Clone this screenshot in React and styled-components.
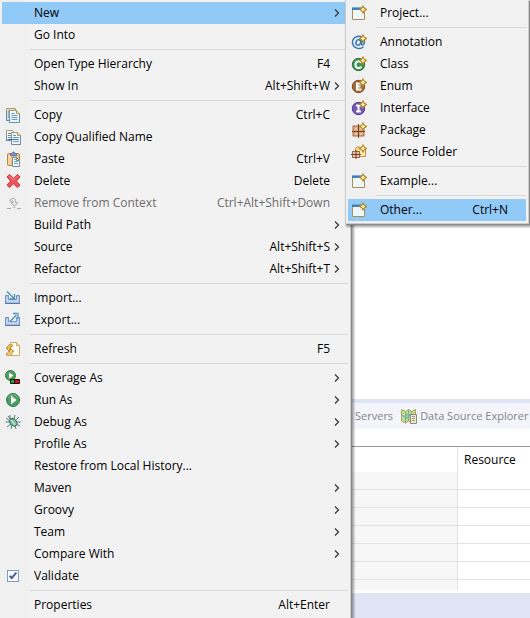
import React from "react";
import styled, { createGlobalStyle, css } from "styled-components";

const GlobalStyle = createGlobalStyle`
  *, *::before, *::after { box-sizing: border-box; }
  body {
    margin: 0;
    overflow: hidden;
    background: #fff;
    color: #000;
    font: 12px/22px "Open Sans", "Noto Sans", sans-serif;
  }
`;

const Page = styled.div`
  position: relative;
  height: 100vh;
  overflow: hidden;
`;

/* ---------- Workbench behind the menus ---------- */

const Workbench = styled.main`
  display: flex;
  flex-direction: column;
  height: 100%;
`;

const Editor = styled.section`
  flex: 1;
  background: #fff;
`;

const TabBar = styled.nav`
  display: flex;
  gap: 8px;
  height: 30px;
  padding-left: 355px;
  overflow: hidden;
  border-top: 4px solid #dfe5f5;
  background: #f4f4fb;
`;

const Tab = styled.button`
  display: flex;
  flex: none;
  align-items: center;
  gap: 3px;
  padding: 0;
  border: 0;
  background: none;
  color: #85858a;
  font: inherit;
  font-size: 11px;
  white-space: nowrap;
`;

const Problems = styled.section`
  padding: 17px 0 3px;
`;

const Grid = styled.table`
  width: 100%;
  table-layout: fixed;
  border-collapse: separate;
  border-spacing: 0;
  border-top: 1px solid #999;

  th, td {
    height: 18px;
    padding: 0 6px;
    border-bottom: 1px solid #e2e2e2;
    font-weight: normal;
    text-align: left;
    line-height: 16px;
  }
  th { height: 25px; border-bottom: 0; }
  th:first-child, td:first-child { border-right: 1px solid #e2e2e2; }
  td:first-child { background: #f7f7f7; }
  tbody tr:last-child td { height: 10px; border-bottom: 0; line-height: 8px; }
`;

const FirstColumn = styled.col`
  width: 458px;
`;

const StatusBar = styled.footer`
  flex: none;
  height: 25px;
  background: #dfe5f5;
`;

/* ---------- Menus ---------- */

const Menu = styled.div`
  position: absolute;
  top: 0;
  left: ${(p) => p.$left}px;
  width: ${(p) => p.$width}px;
  padding: 2px;
  border: solid #ccc;
  border-width: ${(p) => (p.$nested ? "0 1px 1px" : "0 1px 0 0")};
  background: linear-gradient(to right, #f0f0f0 30px, #f2f2f2 30px);
  box-shadow: 1px 1px 0 #888, 2px 2px 2px 1px rgba(0, 0, 0, 0.35);
`;

const rowStyle = css`
  display: flex;
  align-items: center;
  width: 100%;
  height: 22px;
  padding: 0 8px 0 0;
  border: 0;
  background: ${(p) => (p.$active ? "#91c9f7" : "transparent")};
  color: ${(p) => (p.$muted ? "#6d6d6d" : "#000")};
  font: inherit;
  text-align: left;
  white-space: nowrap;
`;

const ItemButton = styled.button`${rowStyle}`;
const ItemLabel = styled.label`${rowStyle}`;

const Gutter = styled.span`
  display: flex;
  flex: none;
  align-items: center;
  width: 32px;
  padding-left: 3px;
`;

const Caption = styled.span`
  flex: 1;
`;

const Shortcut = styled.span`
  padding-right: ${(p) => (p.$nested ? 10 : 4)}px;
`;

const ArrowSlot = styled.span`
  display: flex;
  width: 6px;
`;

const Divider = styled.hr`
  height: 1px;
  margin: 3px 0 3px 28px;
  border: 0;
  background: #d7d7d7;
`;

const Tick = styled.input`
  display: grid;
  place-items: center;
  width: 12px;
  height: 12px;
  margin: 0 0 0 2px;
  appearance: none;
  border: 1px solid #7f9db9;
  background: #f4f8fc;

  &:checked::after {
    content: "";
    width: 4px;
    height: 8px;
    border: solid #4a5f88;
    border-width: 0 2px 2px 0;
    transform: translateY(-1px) rotate(40deg);
  }
`;

/* ---------- Icons ---------- */

const Svg = ({ children }) => (
  <svg width="16" height="16" viewBox="0 0 16 16" fill="none" aria-hidden="true">{children}</svg>
);

const Spark = () => (
  <path d="M12 1 13.300 3.200 15.500 4.500l-2.200 1.300L12 8l-1.300-2.200L8.500 4.500l2.200-1.300Z" fill="#fff9d8" stroke="#b98a1c" strokeWidth="1.200" />
);

const WindowIcon = () => (
  <Svg>
    <rect x="1" y="3" width="13" height="12" fill="#f7fbff" />
    <path d="M1.500 4v10.500h12V5" stroke="#a98f55" />
    <path d="M2 14V6h11v8Z" fill="#edf7fc" />
    <rect x="1" y="2" width="13" height="3" fill="#3d7fbd" />
    <path d="M1 2.500h13" stroke="#75acd8" />
    <Spark />
  </Svg>
);

const AnnotationIcon = () => (
  <Svg>
    <path d="M12.600 12.800C10.800 14.400 7.500 15 4.800 13.600 1.600 12 .6 8.200 2.400 5.200 4.200 2.300 8 1.400 11 3.100c2.600 1.600 3 5.200 1.800 7-.9 1.300-2.500 1-2.300-.5l.7-4" stroke="#3777b1" strokeWidth="1.500" />
    <ellipse cx="7.300" cy="8.500" rx="2.300" ry="2.800" transform="rotate(22 7.300 8.500)" stroke="#3777b1" strokeWidth="1.500" />
    <Spark />
  </Svg>
);

const TypeIcon = ({ fill, edge, letter }) => (
  <Svg>
    <circle cx="7.500" cy="8.500" r="6.200" fill={fill} stroke={edge} />
    {letter}
    <Spark />
  </Svg>
);

const ClassIcon = () => (
  <TypeIcon fill="#399552" edge="#28723e" letter={<path d="M10.300 6.500C8.500 4.500 4.500 5 4.500 8.700c0 3.600 3.800 4.300 6 2.100" stroke="#fff" strokeWidth="2" />} />
);
const EnumIcon = () => (
  <TypeIcon fill="#a36b3c" edge="#7c4c23" letter={<path d="M10 5.500H6v6h4.500M6 8.500h3.500" stroke="#fff" strokeWidth="2" />} />
);
const InterfaceIcon = () => (
  <TypeIcon fill="#7458b5" edge="#533993" letter={<path d="M5 5.500h5M5 11.500h5M7.500 5v7" stroke="#fff" strokeWidth="2" />} />
);

const PackageIcon = () => (
  <Svg>
    <rect x="2" y="4" width="11" height="10" fill="#d8a77c" stroke="#a46d48" />
    <path d="M4 6.500h2M9 6.500h2M4 12h2M9 12h2" stroke="#edc9a5" strokeWidth="2" />
    <path d="M7.500 2v14M1 9.500h13" stroke="#713f2b" />
    <Spark />
  </Svg>
);

const SourceFolderIcon = () => (
  <Svg>
    <path d="M4.500 12.500v-8L6 3h3l1 2h4.500v7.500Z" fill="#fbd991" stroke="#c8903d" />
    <path d="M6 7h8v5H6Z" fill="#fce9b4" />
    <rect x="1.500" y="7.500" width="7" height="6" fill="#e6c9a9" stroke="#9a6a4c" />
    <path d="M5 6v9M0 10.500h10" stroke="#713f2b" />
    <Spark />
  </Svg>
);

const CopyIcon = () => (
  <Svg>
    <path d="M1.500 1.500h9v12h-9Z" fill="#cfe1ee" stroke="#b29a5c" />
    <path d="M1.500 4v9.500H5" stroke="#5f8aa6" />
    <path d="M3 4h1.500M3 6h1.500M3 8h1.500M3 10h1.500" stroke="#5583ad" />
    <path d="M4.500 3.500h7l3 3v9h-10Z" fill="#eef6fd" stroke="#6f8ba2" />
    <path d="M4.500 9V3.500h7l3 3" stroke="#b29a5c" />
    <path d="M11.500 3.500v3h3" fill="#f4dda5" stroke="#b29a5c" />
    <path d="M6.500 6.500h3M6.500 8.500h6M6.500 10.500h6M6.500 12.500h6" stroke="#669acb" />
  </Svg>
);

const CopyNameIcon = () => (
  <Svg>
    <path d="M1.500 1.500h6l2 2v8h-8Z" fill="#eef6fd" stroke="#b29a5c" />
    <path d="M1.500 6v5.500h5" stroke="#6f8ba2" />
    <path d="M3 4.500h3M3 6.500h3M3 8.500h3" stroke="#5f92c4" />
    <path d="M6.500 3.500h6l3 3v9h-9Z" fill="#eef6fd" stroke="#6f8ba2" />
    <path d="M6.500 8V3.500h6l3 3" stroke="#b29a5c" />
    <path d="M12.500 3.500v3h3" fill="#f4dda5" stroke="#b29a5c" />
    <path d="M8 6.500h3M8 8.500h6M8 12.500h6" stroke="#669acb" />
    <path d="M2.500 10.500h11" stroke="#446f9f" />
  </Svg>
);

const PasteIcon = () => (
  <Svg>
    <rect x="2.500" y="2.500" width="12" height="12" rx="1" fill="#efbd7d" stroke="#b88443" />
    <path d="M4.500 4v9.500" stroke="#fce0b1" strokeWidth="2" />
    <path d="M5.500 4.500v-2H7L8 1h1l1 1.500h1.500v2Z" fill="#879bc2" stroke="#5b74a3" />
    <path d="M7.500 6.500h4l3 3v6h-7Z" fill="#f8fcff" stroke="#6f8ba2" />
    <path d="M9 8.500h2M9 10.500h4M9 12.500h4" stroke="#64a0c9" />
    <path d="M11.500 6.500v3h3" stroke="#6f8ba2" />
  </Svg>
);

const DeleteIcon = () => (
  <Svg>
    <path d="M4.500 1.500 8.500 5.200l4-3.700 2.500 2.300-3.600 4.400 3.600 4-2.500 2.400-4-3.800-4 3.800L2 12.200l3.600-4L2 3.800Z" fill="#ee555a" stroke="#cd343c" strokeLinejoin="round" />
    <path d="m4.500 3.200 4 3.600 4-3.600" stroke="#f88d8d" />
  </Svg>
);

const RemoveIcon = () => (
  <Svg>
    <path d="M4.500 5.500 7 3.500c2-.8 3.600.4 3.600 2.200v2h2.200L9.500 11.300 6 7.700h2.200V6.500c0-1-1.200-1-2 .2Z" fill="#ededed" stroke="#a9a9a9" />
    <path d="M2 13.500h4M12 13.500h4" stroke="#aaa" />
    <path d="M7 12.500h4" stroke="#ccc" />
  </Svg>
);

const Tray = () => (
  <>
    <path d="M.5 5.500h3v4h8v-4h3v8H.5Z" fill="#a9bfe1" stroke="#7393c3" />
    <path d="M0 13.500h15" stroke="#5578ad" />
    <path d="M2 7v4h11V7" stroke="#dce8f6" />
  </>
);

const ImportIcon = () => (
  <Svg>
    <Tray />
    <path d="m2 1.500 7 7M9.500 4v5h-5" stroke="#448fb4" strokeWidth="1.300" />
  </Svg>
);

const ExportIcon = () => (
  <Svg>
    <Tray />
    <path d="m5 9.500 7-7M8 1.500h5v5" stroke="#448fb4" strokeWidth="1.300" />
    <path d="m10 2 3-.5-.5 3Z" fill="#a2d0e3" />
  </Svg>
);

const RefreshIcon = () => (
  <Svg>
    <path d="M5.500 1.500h6l3 3v10h-9Z" fill="#fffdf4" stroke="#c8aa63" />
    <path d="M11.500 1.500v3h3" fill="#f6dfa1" stroke="#c8aa63" />
    <path d="M7.500 4C4.500 2.500 2.500 4.500 2.500 7H1l2.500 2.500L6 7H4.800c0-1.200 1-1.700 2.200-1.200Z" fill="#f1c868" stroke="#bd8428" />
    <path d="M1.500 14c3 1.500 6-.5 6-3.500h1.300L6 8l-2.500 2.500H5c0 1.500-1 2-3 1.500Z" fill="#f7d988" stroke="#bd8428" />
  </Svg>
);

const CoverageIcon = () => (
  <Svg>
    <circle cx="5.500" cy="5.500" r="5" fill="#4b9e60" stroke="#367f4a" />
    <path d="m4 2.500 4.500 3-4.500 3Z" fill="#fff" />
    <path d="M5.500 9.500h9v4h-9Z" fill="#1cae29" stroke="#111" />
    <path d="M10 10h4v3h-4Z" fill="#d40d18" />
    <path d="M9.500 10v3" stroke="#111" />
  </Svg>
);

const RunIcon = () => (
  <Svg>
    <circle cx="8" cy="8" r="6.500" fill="#4a9d60" stroke="#2e7744" />
    <path d="M3 6a5.500 5.500 0 0 1 10 0" stroke="#78b987" />
    <path d="m6 3.500 5.500 4.500L6 12.500Z" fill="#fff" />
  </Svg>
);

const DebugIcon = () => (
  <Svg>
    <path d="M5 1v4l1 1M10 1 9 5M1 4l4 3M.5 8H5M2 13l4-3M6 15l1-4M11 15l-1-4M15 12l-4-2M15.500 8H11M14 3l-3 3M3 2l3 4" stroke="#557b7d" />
    <ellipse cx="8.300" cy="8.300" rx="3" ry="4.200" transform="rotate(-42 8.300 8.300)" fill="#8fc5ab" stroke="#36736d" />
    <path d="m6.500 6.500 3.500 4" stroke="#d3eddc" />
  </Svg>
);

const DataSourceIcon = () => (
  <Svg>
    <path d="m.5 1.500 4 2 3-2 3 2 4-2v12l-4 1.500-3-2-3 2-4-2Z" fill="#c5e37d" stroke="#a2a478" />
    <path d="M4.500 3v12M7.500 1.500V13M10.500 3v4" stroke="#999f78" />
    <path d="m1 7 3 2 3-3 3 2M5 11l5-5" stroke="#70b7c8" strokeWidth="1.500" />
    <path d="M9.500 6.500h6v9h-6Z" fill="#eee9d7" stroke="#918b76" />
    <path d="M11 8.500h3M11 10.500h3M11 12.500h3" stroke="#a39d89" />
  </Svg>
);

const Arrow = () => (
  <svg width="6" height="8" viewBox="0 0 6 8" fill="none" aria-hidden="true">
    <path d="m1 .5 3.500 3.500L1 7.500" stroke="#333" strokeWidth="1.200" />
  </svg>
);

/* ---------- Menu content ---------- */

const mainGroups = [
  [
    { label: "New", sub: true, active: true },
    { label: "Go Into" },
  ],
  [
    { label: "Open Type Hierarchy", keys: "F4" },
    { label: "Show In", keys: "Alt+Shift+W", sub: true },
  ],
  [
    { label: "Copy", keys: "Ctrl+C", icon: CopyIcon },
    { label: "Copy Qualified Name", icon: CopyNameIcon },
    { label: "Paste", keys: "Ctrl+V", icon: PasteIcon },
    { label: "Delete", keys: "Delete", icon: DeleteIcon },
    { label: "Remove from Context", keys: "Ctrl+Alt+Shift+Down", icon: RemoveIcon, muted: true },
    { label: "Build Path", sub: true },
    { label: "Source", keys: "Alt+Shift+S", sub: true },
    { label: "Refactor", keys: "Alt+Shift+T", sub: true },
  ],
  [
    { label: "Import...", icon: ImportIcon },
    { label: "Export...", icon: ExportIcon },
  ],
  [{ label: "Refresh", keys: "F5", icon: RefreshIcon }],
  [
    { label: "Coverage As", sub: true, icon: CoverageIcon },
    { label: "Run As", sub: true, icon: RunIcon },
    { label: "Debug As", sub: true, icon: DebugIcon },
    { label: "Profile As", sub: true },
    { label: "Restore from Local History..." },
    { label: "Maven", sub: true },
    { label: "Groovy", sub: true },
    { label: "Team", sub: true },
    { label: "Compare With", sub: true },
    { label: "Validate", check: true },
  ],
  [{ label: "Properties", keys: "Alt+Enter" }],
];

const newGroups = [
  [{ label: "Project...", icon: WindowIcon }],
  [
    { label: "Annotation", icon: AnnotationIcon },
    { label: "Class", icon: ClassIcon },
    { label: "Enum", icon: EnumIcon },
    { label: "Interface", icon: InterfaceIcon },
    { label: "Package", icon: PackageIcon },
    { label: "Source Folder", icon: SourceFolderIcon },
  ],
  [{ label: "Example...", icon: WindowIcon }],
  [{ label: "Other...", keys: "Ctrl+N", icon: WindowIcon, active: true }],
];

function MenuItem({ item, nested }) {
  const Icon = item.icon;
  if (item.check) {
    return (
      <ItemLabel>
        <Gutter><Tick type="checkbox" defaultChecked /></Gutter>
        <Caption>{item.label}</Caption>
      </ItemLabel>
    );
  }
  return (
    <ItemButton
      type="button"
      role="menuitem"
      aria-haspopup={item.sub ? "menu" : undefined}
      disabled={item.muted}
      $active={item.active}
      $muted={item.muted}
    >
      <Gutter>{Icon && <Icon />}</Gutter>
      <Caption>{item.label}</Caption>
      {item.keys && <Shortcut $nested={nested}>{item.keys}</Shortcut>}
      {!nested && <ArrowSlot>{item.sub && <Arrow />}</ArrowSlot>}
    </ItemButton>
  );
}

function PopupMenu({ groups, left, width, nested, label }) {
  return (
    <Menu role="menu" aria-label={label} $left={left} $width={width} $nested={nested}>
      {groups.map((group, i) => (
        <React.Fragment key={group[0].label}>
          {i > 0 && <Divider />}
          {group.map((item) => <MenuItem key={item.label} item={item} nested={nested} />)}
        </React.Fragment>
      ))}
    </Menu>
  );
}

export default function App() {
  return (
    <Page>
      <GlobalStyle />
      <Workbench>
        <Editor />
        <TabBar>
          <Tab type="button">Servers</Tab>
          <Tab type="button"><DataSourceIcon />Data Source Explorer</Tab>
        </TabBar>
        <Problems>
          <Grid>
            <colgroup><FirstColumn /><col /></colgroup>
            <thead><tr><th /><th scope="col">Resource</th></tr></thead>
            <tbody>
              {Array.from({ length: 7 }, (_, i) => <tr key={i}><td /><td /></tr>)}
            </tbody>
          </Grid>
        </Problems>
        <StatusBar />
      </Workbench>
      <PopupMenu label="Context menu" groups={mainGroups} left={0} width={351} />
      <PopupMenu label="New" groups={newGroups} left={345} width={184} nested />
    </Page>
  );
}
